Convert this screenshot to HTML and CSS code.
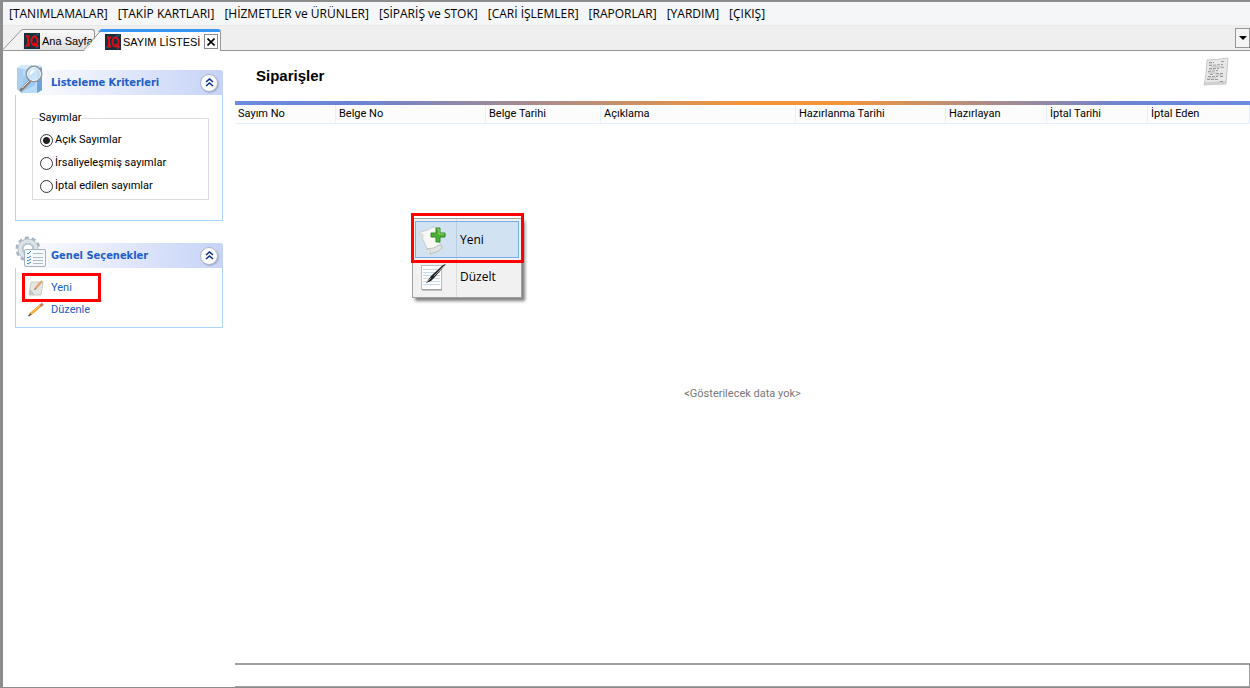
FILE: index.html
```html
<!DOCTYPE html>
<html lang="tr">
<head>
  <meta charset="UTF-8" />
  <meta name="viewport" content="width=device-width, initial-scale=1.0"/>
  <title>Sayım Listesi</title>
  <link rel="stylesheet" href="styles.css">
</head>
<body>
  <nav class="menubar">
    <button>[TANIMLAMALAR]</button>
    <button>[TAKİP KARTLARI]</button>
    <button>[HİZMETLER ve ÜRÜNLER]</button>
    <button>[SİPARİŞ ve STOK]</button>
    <button>[CARİ İŞLEMLER]</button>
    <button>[RAPORLAR]</button>
    <button>[YARDIM]</button>
    <button>[ÇIKIŞ]</button>
  </nav>

  <div class="tabs">
    <div class="tab">
      <svg class="slant" width="20" height="21" viewBox="0 0 20 21"><path d="M0 21L18 2L20 0.5V21Z" fill="#f2f2f2"/><path d="M0 20.500L17 2.500Q18.500 0.500 20 0.500" fill="none" stroke="#969696"/></svg>
      <button class="tab-body">
        <svg class="logo" width="16" height="16" viewBox="0 0 16 16"><rect width="16" height="16" fill="#17303c"/><path d="M1 14L6 10M10 3L15 1M2 2l2 2M12 15l3-3" stroke="#28647c"/><path d="M2 3.500H6M2 12.500H6M4 3V13" stroke="#e00c14" stroke-width="2"/><ellipse cx="10.500" cy="8" rx="3" ry="4.500" fill="none" stroke="#e00c14" stroke-width="2"/><path d="M10 10L14 14" stroke="#e00c14" stroke-width="2"/></svg>
        <span>Ana Sayfa</span>
      </button>
    </div>
    <div class="tab active">
      <svg class="slant" width="20" height="22" viewBox="0 0 20 22"><path d="M0 22L18 1L20 0V22Z" fill="#fff"/><path d="M17 0H20V3H14Z" fill="#3996f5"/><path d="M0 20.500L17 1.500" fill="none" stroke="#969696"/></svg>
      <div class="tab-body">
        <svg class="logo" width="16" height="16" viewBox="0 0 16 16"><rect width="16" height="16" fill="#17303c"/><path d="M1 14L6 10M10 3L15 1M2 2l2 2M12 15l3-3" stroke="#28647c"/><path d="M2 3.500H6M2 12.500H6M4 3V13" stroke="#e00c14" stroke-width="2"/><ellipse cx="10.500" cy="8" rx="3" ry="4.500" fill="none" stroke="#e00c14" stroke-width="2"/><path d="M10 10L14 14" stroke="#e00c14" stroke-width="2"/></svg>
        <span>SAYIM LİSTESİ</span>
        <button class="close" aria-label="Kapat"><svg width="8" height="8" viewBox="0 0 8 8"><path d="M0.500 0.500L7.500 7.500M7.500 0.500L0.500 7.500" stroke="#000" stroke-width="1.600"/></svg></button>
      </div>
    </div>
    <button class="tab-list" aria-label="Sekmeler"><svg width="8" height="4" viewBox="0 0 8 4"><path d="M0 0H8L4 4Z"/></svg></button>
  </div>

  <div class="workspace">
    <aside class="sidebar">
      <section class="panel">
        <header class="panel-head">
          <svg class="panel-icon" width="32" height="32" viewBox="0 0 32 32">
            <path d="M2 5L7 2H25L27 5V27L22 30H7L2 26Z" fill="#8ab9e8"/>
            <path d="M2 5L8 6V30L2 26Z" fill="#a9cff3"/>
            <path d="M8 6H22V30H8Z" fill="#b9daf8"/>
            <path d="M22 6L27 4V27L22 30Z" fill="#6fa4da"/>
            <path d="M2 5L7 2H25L27 4L22 6H8Z" fill="#d4e9fb"/>
            <path d="M8 14L20 9V22L8 28Z" fill="#9dc8f1"/>
            <path d="M15 18L6 27" stroke="#8a7c72" stroke-width="3" stroke-linecap="round"/>
            <path d="M15 17L7 25" stroke="#e8e4e0"/>
            <circle cx="19" cy="11" r="7.500" fill="#cfe6fa" fill-opacity=".85" stroke="#8e989f" stroke-width="2"/>
            <circle cx="19" cy="11" r="6.500" fill="none" stroke="#f5f8fa"/>
            <path d="M15 10Q16 6 20 7Q18 10 15 12Z" fill="#fff"/>
          </svg>
          <h2>Listeleme Kriterleri</h2>
          <button class="collapse" aria-label="Daralt"><svg width="9" height="9" viewBox="0 0 9 9"><path d="M1 4L4.500 1L8 4M1 8L4.500 5L8 8" fill="none" stroke="#0b318f" stroke-width="1.600"/></svg></button>
        </header>
        <div class="panel-body filter-body">
          <fieldset>
            <legend>Sayımlar</legend>
            <label><input type="radio" name="sayim" checked>Açık Sayımlar</label>
            <label><input type="radio" name="sayim">İrsaliyeleşmiş sayımlar</label>
            <label><input type="radio" name="sayim">İptal edilen sayımlar</label>
          </fieldset>
        </div>
      </section>

      <section class="panel">
        <header class="panel-head">
          <svg class="panel-icon" width="32" height="32" viewBox="0 0 32 32">
            <circle cx="13" cy="13" r="11" fill="none" stroke="#a9b6c3" stroke-width="3" stroke-dasharray="4 2.900"/>
            <circle cx="13" cy="13" r="8" fill="none" stroke="#adbac6" stroke-width="5"/>
            <circle cx="13" cy="13" r="8" fill="none" stroke="#dbe3eb" stroke-width="3.500"/>
            <circle cx="13" cy="13" r="5" fill="#fff" stroke="#a9b5c1"/>
            <rect x="9.500" y="13.500" width="21" height="17" rx="1.500" fill="#f6f9fc" stroke="#a5b1bd"/>
            <path d="M18 17.500H28M18 21.500H28M18 24.500H28M18 27.500H28" stroke="#aebac6"/>
            <path d="M12 17l1 1 3-3M12 21l1 1 3-2M12 24l1 1 3-2M12 27l1 1 3-2" fill="none" stroke="#3e86c8"/>
          </svg>
          <h2>Genel Seçenekler</h2>
          <button class="collapse" aria-label="Daralt"><svg width="9" height="9" viewBox="0 0 9 9"><path d="M1 4L4.500 1L8 4M1 8L4.500 5L8 8" fill="none" stroke="#0b318f" stroke-width="1.600"/></svg></button>
        </header>
        <div class="panel-body links-body">
          <a class="marked" href="#">
            <svg width="16" height="16" viewBox="0 0 16 16"><path d="M3 2H15L13 15H1Z" fill="#e3e6e1"/><path d="M1 15L2 9L7 15Z" fill="#bfc7c1"/><path d="M3 2H15L13 15H1L3 2" fill="none" stroke="#c7cbc8"/><path d="M7 9L14 1" stroke="#e2a163" stroke-width="2"/><path d="M6 10L8 8" stroke="#8d8072"/></svg>
            Yeni
          </a>
          <a href="#">
            <svg width="16" height="16" viewBox="0 0 16 16"><path d="M2 12.500L12 4" stroke="#e99a25" stroke-width="2.500"/><path d="M3 11.500L12 3.500" stroke="#ffd369"/><path d="M12 4L15 2" stroke="#c87e62" stroke-width="3"/><path d="M0.500 14L3 12" stroke="#514438" stroke-width="1.500"/></svg>
            Düzenle
          </a>
        </div>
      </section>
    </aside>

    <main class="content">
      <header class="page-head">
        <h1>Siparişler</h1>
        <svg width="26" height="30" viewBox="0 0 26 30">
          <path d="M4 3Q12 3 25 1L23 27Q12 27 1 28Q3 20 4 3Z" fill="#e8e8e8" stroke="#c8c8c8"/>
          <path d="M1 28Q12 27 23 27L23 24Q12 25 2 25Z" fill="#d0d0d0"/>
          <path d="M6 5.500H11M18 4.500H22M6 8.500L20 7.500M6 11.500H16M18 10.500H22M5 14.500L15 13.500M7 17.500H11M13 16.500H21M5 19.500H15M17 19.500H20M4 22.500H15M17 24.500H21" stroke="#999" stroke-dasharray="3 1"/>
          <path d="M6 7H9M8 10H21M6 13H12M5 16H14M12 18H20M4 21H13" stroke="#bdbdbd"/>
        </svg>
      </header>
      <div class="rule"></div>
      <table class="grid">
        <colgroup>
          <col class="col-s"><col class="col-l"><col class="col-m"><col class="col-xl"><col class="col-l"><col class="col-s"><col class="col-s"><col>
        </colgroup>
        <thead>
          <tr>
            <th>Sayım No</th>
            <th>Belge No</th>
            <th>Belge Tarihi</th>
            <th>Açıklama</th>
            <th>Hazırlanma Tarihi</th>
            <th>Hazırlayan</th>
            <th>İptal Tarihi</th>
            <th>İptal Eden</th>
          </tr>
        </thead>
      </table>
      <div class="empty">&lt;Gösterilecek data yok&gt;</div>
      <footer class="status"></footer>
    </main>
  </div>

  <div class="popup" role="menu">
    <button class="popup-item selected" role="menuitem">
      <svg width="32" height="32" viewBox="0 0 32 32">
        <path d="M3 8Q10 7 16 3Q21 3 20 8Q20 16 25 23Q22 27 13 30Q9 29 10 25Q8 19 5 14Q1 11 3 8Z" fill="#f7f7f6" stroke="#c9ccca"/>
        <path d="M10 25Q17 25 22 21Q26 21 25 24Q22 28 13 30Q14 26 10 25Z" fill="#e3e4e2" stroke="#bcc0bd"/>
        <path d="M3 8Q7 9 7 13L5 14Q1 11 3 8Z" fill="#dedfdd"/>
        <path d="M19 4H23V9H28V13H23V18H19V13H14V9H19Z" fill="#4cae32" stroke="#2f8a22"/>
        <path d="M20 5H22V10H27" fill="none" stroke="#92d66f"/>
      </svg>
      <span>Yeni</span>
    </button>
    <button class="popup-item" role="menuitem">
      <svg width="32" height="32" viewBox="0 0 32 32">
        <rect x="4.500" y="4.500" width="20" height="24" fill="#fff" stroke="#bcbcbc"/>
        <path d="M6 8.500H23M6 11.500H23M6 14.500H23M6 17.500H23M6 20.500H23M6 23.500H23" stroke="#c5dcf0"/>
        <path d="M5 29H25" stroke="#8c8c8c"/>
        <path d="M9 22L14 15L26 4L29 3L18 16L14 20Z" fill="#252525"/>
        <path d="M9 22L14 17" stroke="#888"/>
        <path d="M17 15L27 5" stroke="#969696"/>
      </svg>
      <span>Düzelt</span>
    </button>
    <div class="popup-mark"></div>
  </div>
</body>
</html>
```

FILE: styles.css
```css
* {
  box-sizing: border-box;
}

body {
  margin: 0;
  min-height: 100vh;
  display: flex;
  flex-direction: column;
  border: solid #8c8c8c;
  border-width: 2px 0 1px 3px;
  background: #fff;
  color: #000;
  font-family: Roboto, "Liberation Sans", sans-serif;
  font-size: 11px;
  line-height: 14px;
}

button {
  margin: 0;
  padding: 0;
  border: none;
  background: none;
  color: inherit;
  font: inherit;
}

h1, h2 {
  margin: 0;
}

svg {
  display: block;
  flex: none;
}

/* top menu */
.menubar {
  display: flex;
  gap: 10px;
  height: 24px;
  padding: 0 6px;
  background: #f5f6f8;
  border-bottom: 1px solid #e8e9eb;
  font-family: "Open Sans", "Noto Sans", sans-serif;
  font-size: 12px;
  white-space: nowrap;
}

/* tabs */
.tabs {
  display: flex;
  align-items: flex-end;
  height: 25px;
  background: #efefef;
  border-bottom: 1px solid #969696;
  font-family: "Liberation Sans", Arial, sans-serif;
  white-space: nowrap;
}

.tab {
  display: flex;
  height: 21px;
}

.tab-body {
  display: flex;
  align-items: center;
  gap: 2px;
  width: 72px;
  padding-top: 2px;
  border: solid #969696;
  border-width: 1px 1px 0 0;
  border-radius: 0 3px 0 0;
  background: linear-gradient(#fafafa, #dedede);
}

.tab.active {
  position: relative;
  height: 22px;
  margin: 0 0 -1px -11px;
}

.active .tab-body {
  width: 117px;
  padding: 0 2px 0 0;
  border-top: 3px solid #3996f5;
  background: #fff;
}

.logo {
  margin-left: 1px;
}

.close {
  display: flex;
  align-items: center;
  justify-content: center;
  width: 14px;
  height: 15px;
  margin-left: auto;
  border: 1px solid #8c8c8c;
}

.tab-list {
  display: flex;
  align-items: center;
  justify-content: center;
  align-self: center;
  width: 15px;
  height: 20px;
  margin-left: auto;
  border: 1px solid #969696;
  background: #f5f5f5;
}

.workspace {
  flex: 1;
  display: flex;
}

/* left side */
.sidebar {
  display: flex;
  flex-direction: column;
  gap: 22px;
  width: 232px;
  padding: 19px 12px;
}

.panel-head {
  position: relative;
  display: flex;
  align-items: center;
  justify-content: space-between;
  height: 25px;
  padding: 0 5px 0 36px;
  border-radius: 0 3px 0 0;
  background: linear-gradient(to right, #fff, #c6d3f7);
  color: #215dc6;
}

.panel-icon {
  position: absolute;
  left: 0;
  bottom: 0;
}

.panel-head h2 {
  font-family: "DejaVu Sans Condensed", "Noto Sans", sans-serif;
  font-size: 11px;
}

.collapse {
  display: flex;
  align-items: center;
  justify-content: center;
  width: 18px;
  height: 18px;
  border: 1px solid #a9b4cf;
  border-radius: 50%;
  background: #fff;
  box-shadow: 1px 1px 1px #a7b0c8;
}

.panel-body {
  border: 1px solid #add5fb;
  border-top: none;
}

.filter-body {
  padding: 16px 13px 20px 16px;
}

fieldset {
  display: flex;
  flex-direction: column;
  gap: 9px;
  margin: 0;
  padding: 8px 7px 6px;
  border: 1px solid #dcdcdc;
}

legend {
  margin-left: -1px;
  padding: 0;
}

label {
  display: flex;
  align-items: center;
  gap: 2px;
}

input[type="radio"] {
  appearance: none;
  width: 13px;
  height: 13px;
  margin: 0;
  border: 1px solid #333;
  border-radius: 50%;
  background: #fff;
}

input[type="radio"]:checked {
  background: radial-gradient(circle, #222 3px, #fff 4px);
}

.links-body {
  display: flex;
  flex-direction: column;
  align-items: flex-start;
  padding: 5px 6px 9px;
}

.links-body a {
  display: flex;
  align-items: center;
  gap: 7px;
  height: 16px;
  padding: 0 6px;
  color: #215dc6;
  text-decoration: none;
}

.links-body .marked {
  width: 79px;
  height: 29px;
  padding: 0 3px;
  border: 3px solid #fe0000;
}

/* list */
.content {
  flex: 1;
  display: flex;
  flex-direction: column;
}

.page-head {
  display: flex;
  align-items: center;
  justify-content: space-between;
  height: 50px;
  padding: 0 21px;
}

.page-head h1 {
  font-family: "Liberation Sans", Arial, sans-serif;
  font-size: 15px;
}

.page-head svg {
  margin-bottom: 8px;
}

.rule {
  height: 4px;
  background: linear-gradient(to right, #6b8be4 0%, #6b83d3 12%, #f29539 50%, #f29539 60%, #6b83d3 88%, #6b8be4 100%);
}

.grid {
  width: 100%;
  table-layout: fixed;
  border-collapse: separate;
  border-spacing: 0;
}

.col-s { width: 101px; }
.col-m { width: 115px; }
.col-l { width: 150px; }
.col-xl { width: 195px; }

.grid th {
  height: 19px;
  padding: 0 3px;
  border: solid #e6eef9;
  border-width: 0 1px 1px 0;
  background: #fcfcfc;
  font-weight: normal;
  text-align: left;
  white-space: nowrap;
}

.empty {
  flex: 1;
  display: flex;
  align-items: center;
  justify-content: center;
  color: #777;
}

.status {
  height: 24px;
  border: solid #a0a0a0;
  border-width: 2px 1px 1px 0;
}

/* right click menu */
.popup {
  position: absolute;
  left: 412px;
  top: 218px;
  width: 110px;
  padding: 2px;
  border: 1px solid #a0a0a0;
  background: linear-gradient(to right, #f1f1f1 43px, #dcdcdc 43px, #dcdcdc 44px, #f1f1f1 44px);
  box-shadow: 3px 3px 3px rgba(0,0,0,0.5);
}

.popup-item {
  display: flex;
  align-items: center;
  gap: 11px;
  width: 104px;
  height: 37px;
  padding: 0 1px;
  border: 1px solid transparent;
  font-family: "Open Sans", "Noto Sans", sans-serif;
  font-size: 12px;
}

.popup-item.selected {
  border-color: #78aee5;
  background: linear-gradient(to right, #d1e2f2 40px, #bccfe2 40px, #bccfe2 41px, #d1e2f2 41px);
}

.popup-mark {
  position: absolute;
  left: -2px;
  top: -6px;
  width: 113px;
  height: 50px;
  border: 3px solid #fe0000;
}
```
